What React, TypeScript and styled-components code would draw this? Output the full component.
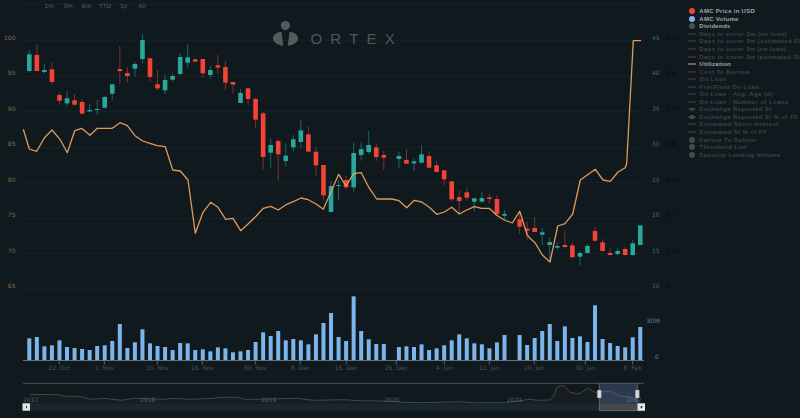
import React from 'react';
import styled, { createGlobalStyle } from 'styled-components';

const GlobalStyle = createGlobalStyle`
    html, body { margin: 0; padding: 0; background: #10191d; }
    #root { width: 800px; height: 418px; overflow: hidden; }
`;

const Page = styled.div`
    display: flex;
    width: 800px;
    height: 418px;
    background: #10191d;
    font-family: "DejaVu Sans", sans-serif;
    overflow: hidden;
`;

const ChartColumn = styled.div`
    position: relative;
    flex: 0 0 684px;
    height: 418px;
`;

const RangeBar = styled.div`
    position: absolute;
    top: 2px;
    left: 40px;
    display: flex;
`;

const RangeButton = styled.span`
    width: 18.6px;
    text-align: center;
    font-size: 6px;
    line-height: 8px;
    color: #565e62;
`;

const Legend = styled.ul`
    flex: 1;
    margin: 0;
    padding: 7.5px 0 0 3.3px;
    list-style: none;
    overflow: hidden;
`;

const LegendRow = styled.li`
    display: flex;
    align-items: center;
    gap: 2px;
    height: 7.55px;
    white-space: nowrap;
`;

const LegendLabel = styled.span<{ $active: boolean }>`
    font-family: "Liberation Sans", sans-serif;
    font-size: 6px;
    font-weight: 700;
    letter-spacing: ${(p) => (p.$active ? '0.28px' : '0.42px')};
    color: ${(p) => (p.$active ? '#a3a8ab' : '#3e4346')};
`;

const AxisText = styled.text<{ $color: string }>`
    font-size: 6px;
    fill: ${(p) => p.$color};
`;

const LogoText = styled.text`
    font-family: "Liberation Sans", sans-serif;
    font-size: 15px;
    letter-spacing: 8.2px;
    fill: #4f565a;
`;

type MarkerKind = 'dot' | 'line' | 'star' | 'pill';

const LegendMarker: React.FC<{ kind: MarkerKind; color: string }> = ({ kind, color }) => (
    <svg width="10" height="8" viewBox="0 0 10 8" style={{ flex: 'none' }}>
        {kind === 'dot' && <circle cx="5" cy="4" r="3" fill={color} />}
        {kind !== 'dot' && <line x1="1" y1="4" x2="9" y2="4" stroke={color} strokeWidth="1" />}
        {kind === 'star' && <path d="M5 1.6 5.8 3.4 7.6 3.6 6.2 4.8 6.7 6.6 5 5.6 3.3 6.6 3.8 4.8 2.4 3.6 4.2 3.4Z" fill={color} />}
        {kind === 'pill' && <ellipse cx="5" cy="4" rx="2.8" ry="2" fill={color} />}
    </svg>
);

const GREY = '#44494c';

const legendItems: { label: string; kind: MarkerKind; color: string; active?: boolean }[] = [
    { label: 'AMC Price in USD', kind: 'dot', color: '#f44336', active: true },
    { label: 'AMC Volume', kind: 'dot', color: '#7cb5ec', active: true },
    { label: 'Dividends', kind: 'dot', color: '#4a4f52', active: true },
    { label: 'Days to cover 3m (on loan)', kind: 'line', color: GREY },
    { label: 'Days to cover 3m (estimated SI)', kind: 'line', color: GREY },
    { label: 'Days to cover 2w (on loan)', kind: 'line', color: GREY },
    { label: 'Days to cover 2w (estimated SI)', kind: 'line', color: GREY },
    { label: 'Utilization', kind: 'line', color: '#f7a35c', active: true },
    { label: 'Cost To Borrow', kind: 'line', color: GREY },
    { label: 'On Loan', kind: 'line', color: GREY },
    { label: 'FreeFloat On Loan', kind: 'line', color: GREY },
    { label: 'On Loan - Avg. Age (d)', kind: 'line', color: GREY },
    { label: 'On Loan - Number of Loans', kind: 'line', color: GREY },
    { label: 'Exchange Reported SI', kind: 'star', color: GREY },
    { label: 'Exchange Reported SI % of FF', kind: 'pill', color: GREY },
    { label: 'Estimated Short Interest', kind: 'line', color: GREY },
    { label: 'Estimated SI % of FF', kind: 'line', color: GREY },
    { label: 'Failure To Deliver', kind: 'dot', color: GREY },
    { label: 'Threshold List', kind: 'dot', color: GREY },
    { label: 'Security Lending Volume', kind: 'dot', color: GREY },
];

// chart plotted in picture pixels, candles are [colour, bodyTop, bodyBottom, wickTop, wickBottom]
type Candle = ['r' | 'g', number, number, number, number] | null;

const part1: Candle[] = [
    ['g', 163, 213, 150, 218], ['r', 165, 213, 133, 213], ['g', 210, 216, 190, 222], ['r', 208, 246, 186, 254],
    ['r', 285, 302, 277, 314], ['g', 295, 310, 273, 318], ['r', 301, 314, 282, 318], ['r', 306, 341, 297, 343],
    ['g', 330, 334, 312, 338], ['g', 327, 328, 300, 345], ['g', 291, 323, 288, 325], ['g', 253, 281, 252, 300],
    ['r', 207, 213, 138, 252], ['r', 219, 228, 201, 248], ['g', 192, 206, 186, 230], ['g', 120, 177, 102, 191],
    ['r', 175, 231, 173, 245], ['r', 253, 265, 210, 270], ['g', 240, 271, 223, 282], ['g', 228, 239, 220, 246],
    ['g', 171, 222, 159, 225], ['g', 172, 188, 133, 203], ['r', 178, 185, 176, 186], ['r', 177, 220, 177, 233],
    ['g', 210, 225, 197, 236], ['r', 196, 203, 165, 222], ['r', 201, 248, 183, 270], ['r', 246, 254, 245, 281],
    ['g', 279, 309, 267, 310], ['r', 265, 297, 262, 315], ['r', 297, 359, 292, 383], ['r', 340, 471, 336, 508],
];
const part2: Candle[] = [
    ['g', 45, 68, 25, 113], ['r', 33, 73, 28, 152], ['g', 77, 93, 40, 110], ['g', 28, 52, 15, 62],
    ['g', 1, 36, -32, 55], ['r', 13, 65, -11, 65], ['r', 65, 106, 52, 137], ['r', 105, 196, 105, 213],
    ['g', 168, 246, 153, 247], ['g', 165, 167, 150, 210], ['r', 150, 172, 138, 178], ['g', 69, 172, 36, 186],
    ['g', 57, 75, 37, 92], ['g', 45, 66, 3, 72], ['r', 52, 81, 40, 93], ['r', 75, 83, 63, 120], null,
    ['g', 78, 87, 65, 114], ['r', 90, 101, 57, 102], ['g', 94, 100, 85, 123], ['g', 73, 98, 46, 100],
    ['r', 78, 113, 64, 115], ['r', 106, 126, 92, 128], ['r', 121, 148, 120, 165], ['r', 154, 208, 152, 214],
    ['r', 201, 213, 182, 250], ['r', 187, 203, 172, 212], ['g', 205, 215, 203, 245], ['g', 204, 215, 184, 218],
    ['r', 202, 207, 192, 222], ['r', 207, 252, 196, 255], ['g', 252, 257, 240, 270], null,
    ['r', 268, 290, 245, 312], ['r', 296, 302, 276, 330],
];
const part3: Candle[] = [
    ['r', 234, 246, 201, 246], ['g', 247, 254, 234, 285], ['g', 276, 285, 262, 335], ['g', 288, 293, 277, 298],
    ['r', 285, 291, 243, 296], ['r', 286, 322, 277, 323], ['g', 309, 320, 304, 345], ['g', 288, 309, 283, 310],
    ['r', 243, 272, 232, 276], ['r', 277, 303, 267, 303], ['r', 309, 315, 292, 317], ['g', 303, 312, 295, 316],
    ['r', 297, 315, 290, 317], ['g', 280, 315, 270, 317], ['g', 226, 285, 226, 285],
];

const toPx = (c: Candle, offset: number): Candle =>
    c && [c[0], offset + c[1] / 3, offset + c[2] / 3, offset + c[3] / 3, offset + c[4] / 3];

const candles: Candle[] = [
    ...part1.map((c) => toPx(c, 0)),
    ...part2.map((c) => toPx(c, 130)),
    ...part3.map((c) => toPx(c, 150)),
];

const volumeTops: (number | null)[] = [
    175, 171, 199, 196, 181, 201, 204, 207, 210, 198, 196, 183, 132, 204, 187, 148, 190, 198, 201, 210, 189, 190,
    210, 208, 214, 202, 205, 217, 214, 210, 186, 157, 168, 153, 181, 177, 181, 193, 163, 129, 99, 171, 183, 49,
    153, 178, 192, 192, null, 201, 199, 201, 193, 210, 205, 196, 181, 163, 175, 190, 193, 205, 187, 165, null,
    165, 195, 174, 153, 132, 183, 139, 174, 169, 186, 76, 177, 189, 198, 202, 172, 141,
];

const xAt = (i: number) => 29.3 + i * 7.543;

const utilization = '23.3,129.3 29.3,149 36.7,151.3 44.3,138 52,130 60,139.3 67.3,152.7 74.7,130.7 81.7,128.3 90,135.3 97.3,128.3 112.3,128.3 120,122.7 127.3,125.7 135,135.7 142.7,141 150,143.3 157.3,145.7 165.3,146.7 172.7,170 180.3,171 188,180 195.3,233.3 203,212.3 210.7,202.3 218,207.3 225.7,219.3 233,218.3 240.7,230.7 248.3,223.7 256,216.3 263.3,208.3 270.7,206.3 278.3,210 286.7,204.3 293.3,201.7 301,198 308.3,199.7 316,204 323.3,209.3 338.7,174.3 346,186 353.7,173.7 361.3,172.7 369,187.7 376.7,199 391.7,199 399,200.7 406.7,207.7 414.3,200.3 421.7,202 429.3,207.3 436.7,214.3 444.3,212 451.7,207.3 459.3,214 466.7,210 474.3,206.7 481.7,208.3 489.3,208.3 496.7,215.3 504.3,220 512.3,223 519.7,211.3 527.3,235 530,238.3 535,242.7 542.3,255 550,262 557.7,226 565,223.7 572.7,214 580.3,180 595.3,169.3 603,180 610.3,181.3 618,172 625.3,167.7 626.7,163 633.3,40.7 641,40.7';
const navigatorLine = '30,394.3 59.3,394.7 63.3,396.3 78.3,396.3 91.7,399.3 103.3,398.3 121.7,400.3 133.3,398.3 165,399.3 173.3,398.3 190,399.3 213.3,398.3 220,397.3 238.3,397.3 245,399.3 260,399.3 280,398.7 296.7,398.3 313.3,400.3 343.3,399.7 360,400.7 383.3,401 403.3,402.3 423.3,402.7 460,401.7 473.3,402.7 506.7,402.7 526.7,399.7 530,399.3 536.7,400.3 550,400 554,395 556.7,387.3 561.7,385.3 565,386.7 570,392.3 578.3,394 588.3,388.3 595,392.3 610,391 620,396 630,396.7 637.3,400.7';

const gridYs = [4.3, 40.3, 76.7, 111.3, 147.3, 182.3, 218.3, 253.3, 289.3];
const priceLabels: [string, number][] = [['100', 37.5], ['95', 73], ['90', 108.5], ['85', 144], ['80', 179.5], ['75', 215], ['70', 250.5], ['65', 286]];
const rightLabels: [string, string, number][] = [
    ['45', '1.05', 37.5], ['40', '0.9', 73], ['35', '0.75', 108.5], ['30', '0.6', 144],
    ['25', '0.45', 179.5], ['20', '0.3', 215], ['15', '0.15', 250.5], ['10', '0', 286],
];
const dateTicks: [string, number][] = [
    ['22. Oct', 59.3], ['1. Nov', 104.3], ['10. Nov', 157.3], ['18. Nov', 202.3], ['30. Nov', 255.3], ['8. Dec', 300.3],
    ['16. Dec', 346.3], ['26. Dec', 396.3], ['4. Jan', 444.3], ['12. Jan', 489.3], ['20. Jan', 534.3], ['30. Jan', 585.3], ['8. Feb', 632.7],
];
const years: [string, number][] = [['2017', 23], ['2018', 140], ['2019', 261], ['2020', 384], ['2021', 507], ['2022', 626]];

const candleColors = {
    r: { body: '#f44336', wick: '#8f322d' },
    g: { body: '#2aa79b', wick: '#1d6f69' },
};

const PriceChart: React.FC = () => (
    <svg width="684" height="418" viewBox="0 0 684 418" style={{ display: 'block' }}>
        {gridYs.map((y) => (
            <line key={y} x1="23" x2="644" y1={y} y2={y} stroke="#1a272c" strokeWidth="0.8" />
        ))}
        <line x1="23" x2="644" y1="324.3" y2="324.3" stroke="#141f24" strokeWidth="0.8" />

        {priceLabels.map(([t, y]) => (
            <AxisText key={t} $color="#8a6a4c" x="15.5" y={y + 2} textAnchor="end">{t}</AxisText>
        ))}
        {rightLabels.map(([a, b, y]) => (
            <React.Fragment key={a}>
                <AxisText $color="#1f7770" x="652" y={y + 2}>{a}</AxisText>
                <AxisText $color="#060a0b" x="666" y={y + 2}>{b}</AxisText>
            </React.Fragment>
        ))}
        <AxisText $color="#4f7ea8" x="647" y="323">80M</AxisText>
        <AxisText $color="#4f7ea8" x="655" y="359">0</AxisText>

        {/* logo */}
        <circle cx="285.4" cy="25.5" r="4.6" fill="#535a5e" />
        <path d="M279.5 32 C275.5 33 273 35.5 273 38.5 C273 41.5 276 44.5 282.5 45.7 L283.3 45.7 L281.5 32Z" fill="#535a5e" />
        <path d="M291.5 32 C295.5 33 298 35.5 298 38.5 C298 41.5 295 44.5 288.5 45.7 L287.7 45.7 L289.5 32Z" fill="#535a5e" />
        <LogoText x="310.5" y="44">ORTEX</LogoText>

        {candles.map((c, i) => {
            if (!c) return null;
            const x = xAt(i);
            const col = candleColors[c[0]];
            return (
                <g key={i}>
                    <line x1={x} x2={x} y1={c[3]} y2={c[4]} stroke={col.wick} strokeWidth="0.9" />
                    <rect x={x - 2.3} y={c[1]} width="4.6" height={Math.max(c[2] - c[1], 1)} fill={col.body} />
                </g>
            );
        })}
        <polyline points={utilization} fill="none" stroke="#f0a55f" strokeWidth="1.3" strokeLinejoin="round" opacity="0.92" />

        {volumeTops.map((t, i) => {
            if (t === null) return null;
            const y = 280 + t / 3;
            return <rect key={i} x={xAt(i) - 2} y={y} width="4" height={360.3 - y} fill="#7cb5ec" />;
        })}
        <line x1="23" x2="644" y1="360.5" y2="360.5" stroke="#6f7a84" strokeWidth="0.9" />
        {dateTicks.map(([t, x]) => (
            <React.Fragment key={t}>
                <line x1={x} x2={x} y1="360.5" y2="364.5" stroke="#6f7a84" strokeWidth="0.8" />
                <AxisText $color="#4a5256" x={x} y="369.8" textAnchor="middle">{t}</AxisText>
            </React.Fragment>
        ))}

        {/* navigator */}
        <line x1="23" x2="644" y1="383.3" y2="383.3" stroke="#50585c" strokeWidth="0.9" />
        <polygon points={`${navigatorLine} 637.3,403 30,403`} fill="#171d20" />
        <polyline points={navigatorLine} fill="none" stroke="#4c5255" strokeWidth="0.8" />
        <rect x="23" y="403.3" width="622" height="7.4" fill="#18272e" />
        {years.map(([t, x]) => (
            <AxisText key={t} $color="#5a5f62" x={x} y="401.8">{t}</AxisText>
        ))}
        <rect x="599.3" y="383.3" width="38" height="20" fill="#6685c2" fillOpacity="0.3" />
        <rect x="599.3" y="403.3" width="39" height="7.4" fill="#45494b" />
        <path d="M599.3 403.3V410.7H645M599.3 383.3V403.3M637.3 383.3V403.3" fill="none" stroke="#777c80" strokeWidth="0.7" />
        <rect x="597.3" y="390" width="4" height="8" rx="0.6" fill="#d8d8d8" stroke="#777" strokeWidth="0.4" />
        <rect x="635.3" y="390" width="4" height="8" rx="0.6" fill="#d8d8d8" stroke="#777" strokeWidth="0.4" />
        <rect x="22.5" y="403.3" width="7.5" height="7.4" fill="#e4e4e4" />
        <rect x="26" y="406" width="1" height="2.2" fill="#333" />
        <rect x="637.5" y="403.3" width="7.5" height="7.4" fill="#e4e4e4" />
        <rect x="640.7" y="406" width="1.6" height="2.2" fill="#333" />
    </svg>
);

const ranges = ['1m', '3m', '6m', 'YTD', '1y', 'All'];

const App: React.FC = () => (
    <Page>
        <GlobalStyle />
        <ChartColumn>
            <PriceChart />
            <RangeBar>
                {ranges.map((r) => <RangeButton key={r}>{r}</RangeButton>)}
            </RangeBar>
        </ChartColumn>
        <Legend>
            {legendItems.map((item) => (
                <LegendRow key={item.label}>
                    <LegendMarker kind={item.kind} color={item.color} />
                    <LegendLabel $active={!!item.active}>{item.label}</LegendLabel>
                </LegendRow>
            ))}
        </Legend>
    </Page>
);

export default App;
